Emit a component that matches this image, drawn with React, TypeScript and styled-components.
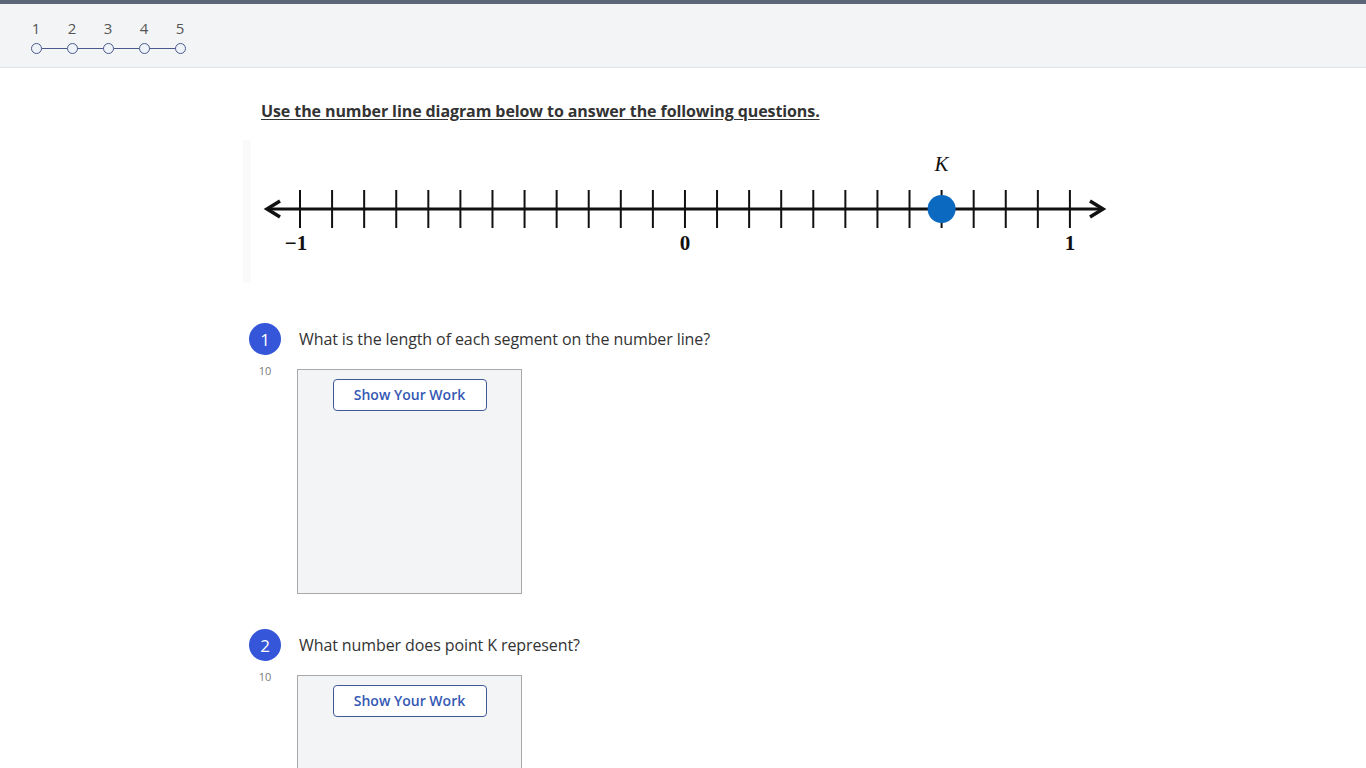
import React from 'react';
import styled, { createGlobalStyle } from 'styled-components';

const GlobalStyle = createGlobalStyle`
  html, body {
    margin: 0;
    padding: 0;
    background: #fff;
    font-family: 'Open Sans', 'Liberation Sans', sans-serif;
    color: #333;
  }
`;

const TopStrip = styled.div`
  height: 4px;
  background-color: #5d6678;
`;

const Header = styled.header`
  height: 63px;
  background-color: #f3f4f5;
  border-bottom: 1px solid #e2e3e5;
  padding-left: 18px;
  display: flex;
  align-items: flex-start;
`;

const Step = styled.div<{ first: boolean; last: boolean }>`
  position: relative;
  width: 36px;
  display: flex;
  flex-direction: column;
  align-items: center;
  padding-top: 14px;
  font-size: 15px;
  line-height: 20px;
  color: #555;
  &::after {
    content: '';
    position: absolute;
    top: 44px;
    height: 1px;
    background-color: #4b5a8c;
    left: ${({ first }) => (first ? '50%' : '0')};
    right: ${({ last }) => (last ? '50%' : '0')};
  }
`;

const StepDot = styled.span`
  position: relative;
  z-index: 1;
  margin-top: 5px;
  width: 9px;
  height: 9px;
  border-radius: 50%;
  border: 1px solid #4b5a8c;
  background-color: #eef2f9;
`;

const Main = styled.main`
  padding: 32px 0 0 243px;
`;

const Instruction = styled.h2`
  margin: 0 0 18px 18px;
  font-size: 16px;
  line-height: 22px;
  font-weight: 700;
  letter-spacing: -0.09px;
  text-decoration: underline;
  text-underline-offset: 2px;
  color: #333;
`;

const Figure = styled.div`
  width: 870px;
  height: 143px;
  background: linear-gradient(to right, #fafafa 0, #fafafa 8px, #fff 8px);
`;

const QuestionList = styled.div`
  margin: 40px 0 0 6px;
  display: flex;
  flex-direction: column;
  gap: 35px;
`;

const Question = styled.section`
  display: grid;
  grid-template-columns: 48px auto;
  grid-template-rows: 32px auto;
  row-gap: 14px;
  align-items: center;
`;

const Badge = styled.div`
  width: 32px;
  height: 32px;
  border-radius: 50%;
  background-color: #3556d8;
  color: #fff;
  font-size: 17px;
  display: flex;
  align-items: center;
  justify-content: center;
`;

const Prompt = styled.p`
  margin: 0 0 0 2px;
  font-size: 16px;
  line-height: 22px;
  letter-spacing: -0.1px;
  color: #333;
`;

const Points = styled.div`
  align-self: start;
  width: 32px;
  margin-top: -6px;
  text-align: center;
  font-size: 11px;
  color: #7a7a7a;
`;

const WorkBox = styled.div`
  width: 223px;
  height: 214px;
  background-color: #f3f4f5;
  border: 1px solid #a8a8a8;
  display: flex;
  justify-content: center;
  align-items: flex-start;
  padding-top: 9px;
`;

const WorkButton = styled.button`
  width: 154px;
  height: 32px;
  padding: 0 0 2px;
  background-color: #fff;
  border: 1px solid #3e5a96;
  border-radius: 4px;
  font-family: 'Open Sans', 'Liberation Sans', sans-serif;
  font-size: 14px;
  font-weight: 600;
  color: #3558b4;
  cursor: pointer;
`;

const NumberLine = () => {
  const y = 69;
  const x0 = 57;
  const step = 32.08;
  const ticks = Array.from({ length: 25 }, (_, i) => x0 + i * step);
  const labelStyle = {
    fontFamily: "'Liberation Serif', 'DejaVu Serif', serif",
    fontSize: 21,
    fontWeight: 700,
    fill: '#111',
  } as const;
  return (
    <svg width="870" height="143" viewBox="0 0 870 143">
      <line x1="24" y1={y} x2="860" y2={y} stroke="#111" strokeWidth="3" />
      <polyline points="37,61 24,69 37,77" fill="none" stroke="#111" strokeWidth="3.5" />
      <polyline points="847,61 860,69 847,77" fill="none" stroke="#111" strokeWidth="3.5" />
      {ticks.map((x, i) => (
        <line key={i} x1={x} y1={50} x2={x} y2={88} stroke="#111" strokeWidth="2" />
      ))}
      <circle cx={x0 + 20 * step} cy={y} r="14" fill="#0b69c0" />
      <text x={x0 - 4} y="110" textAnchor="middle" {...labelStyle}>
        −1
      </text>
      <text x={x0 + 12 * step} y="110" textAnchor="middle" {...labelStyle}>
        0
      </text>
      <text x={x0 + 24 * step} y="110" textAnchor="middle" {...labelStyle}>
        1
      </text>
      <text
        x={x0 + 20 * step}
        y="31"
        textAnchor="middle"
        {...labelStyle}
        fontWeight={400}
        fontStyle="italic"
      >
        K
      </text>
    </svg>
  );
};

const questions = [
  { id: 1, text: 'What is the length of each segment on the number line?', points: 10 },
  { id: 2, text: 'What number does point K represent?', points: 10 },
];

const App = () => {
  const steps = [1, 2, 3, 4, 5];
  return (
    <>
      <GlobalStyle />
      <TopStrip />
      <Header>
        {steps.map((n, i) => (
          <Step key={n} first={i === 0} last={i === steps.length - 1}>
            {n}
            <StepDot />
          </Step>
        ))}
      </Header>
      <Main>
        <Instruction>Use the number line diagram below to answer the following questions.</Instruction>
        <Figure>
          <NumberLine />
        </Figure>
        <QuestionList>
          {questions.map((q) => (
            <Question key={q.id}>
              <Badge>{q.id}</Badge>
              <Prompt>{q.text}</Prompt>
              <Points>{q.points}</Points>
              <WorkBox>
                <WorkButton>Show Your Work</WorkButton>
              </WorkBox>
            </Question>
          ))}
        </QuestionList>
      </Main>
    </>
  );
};

export default App;
